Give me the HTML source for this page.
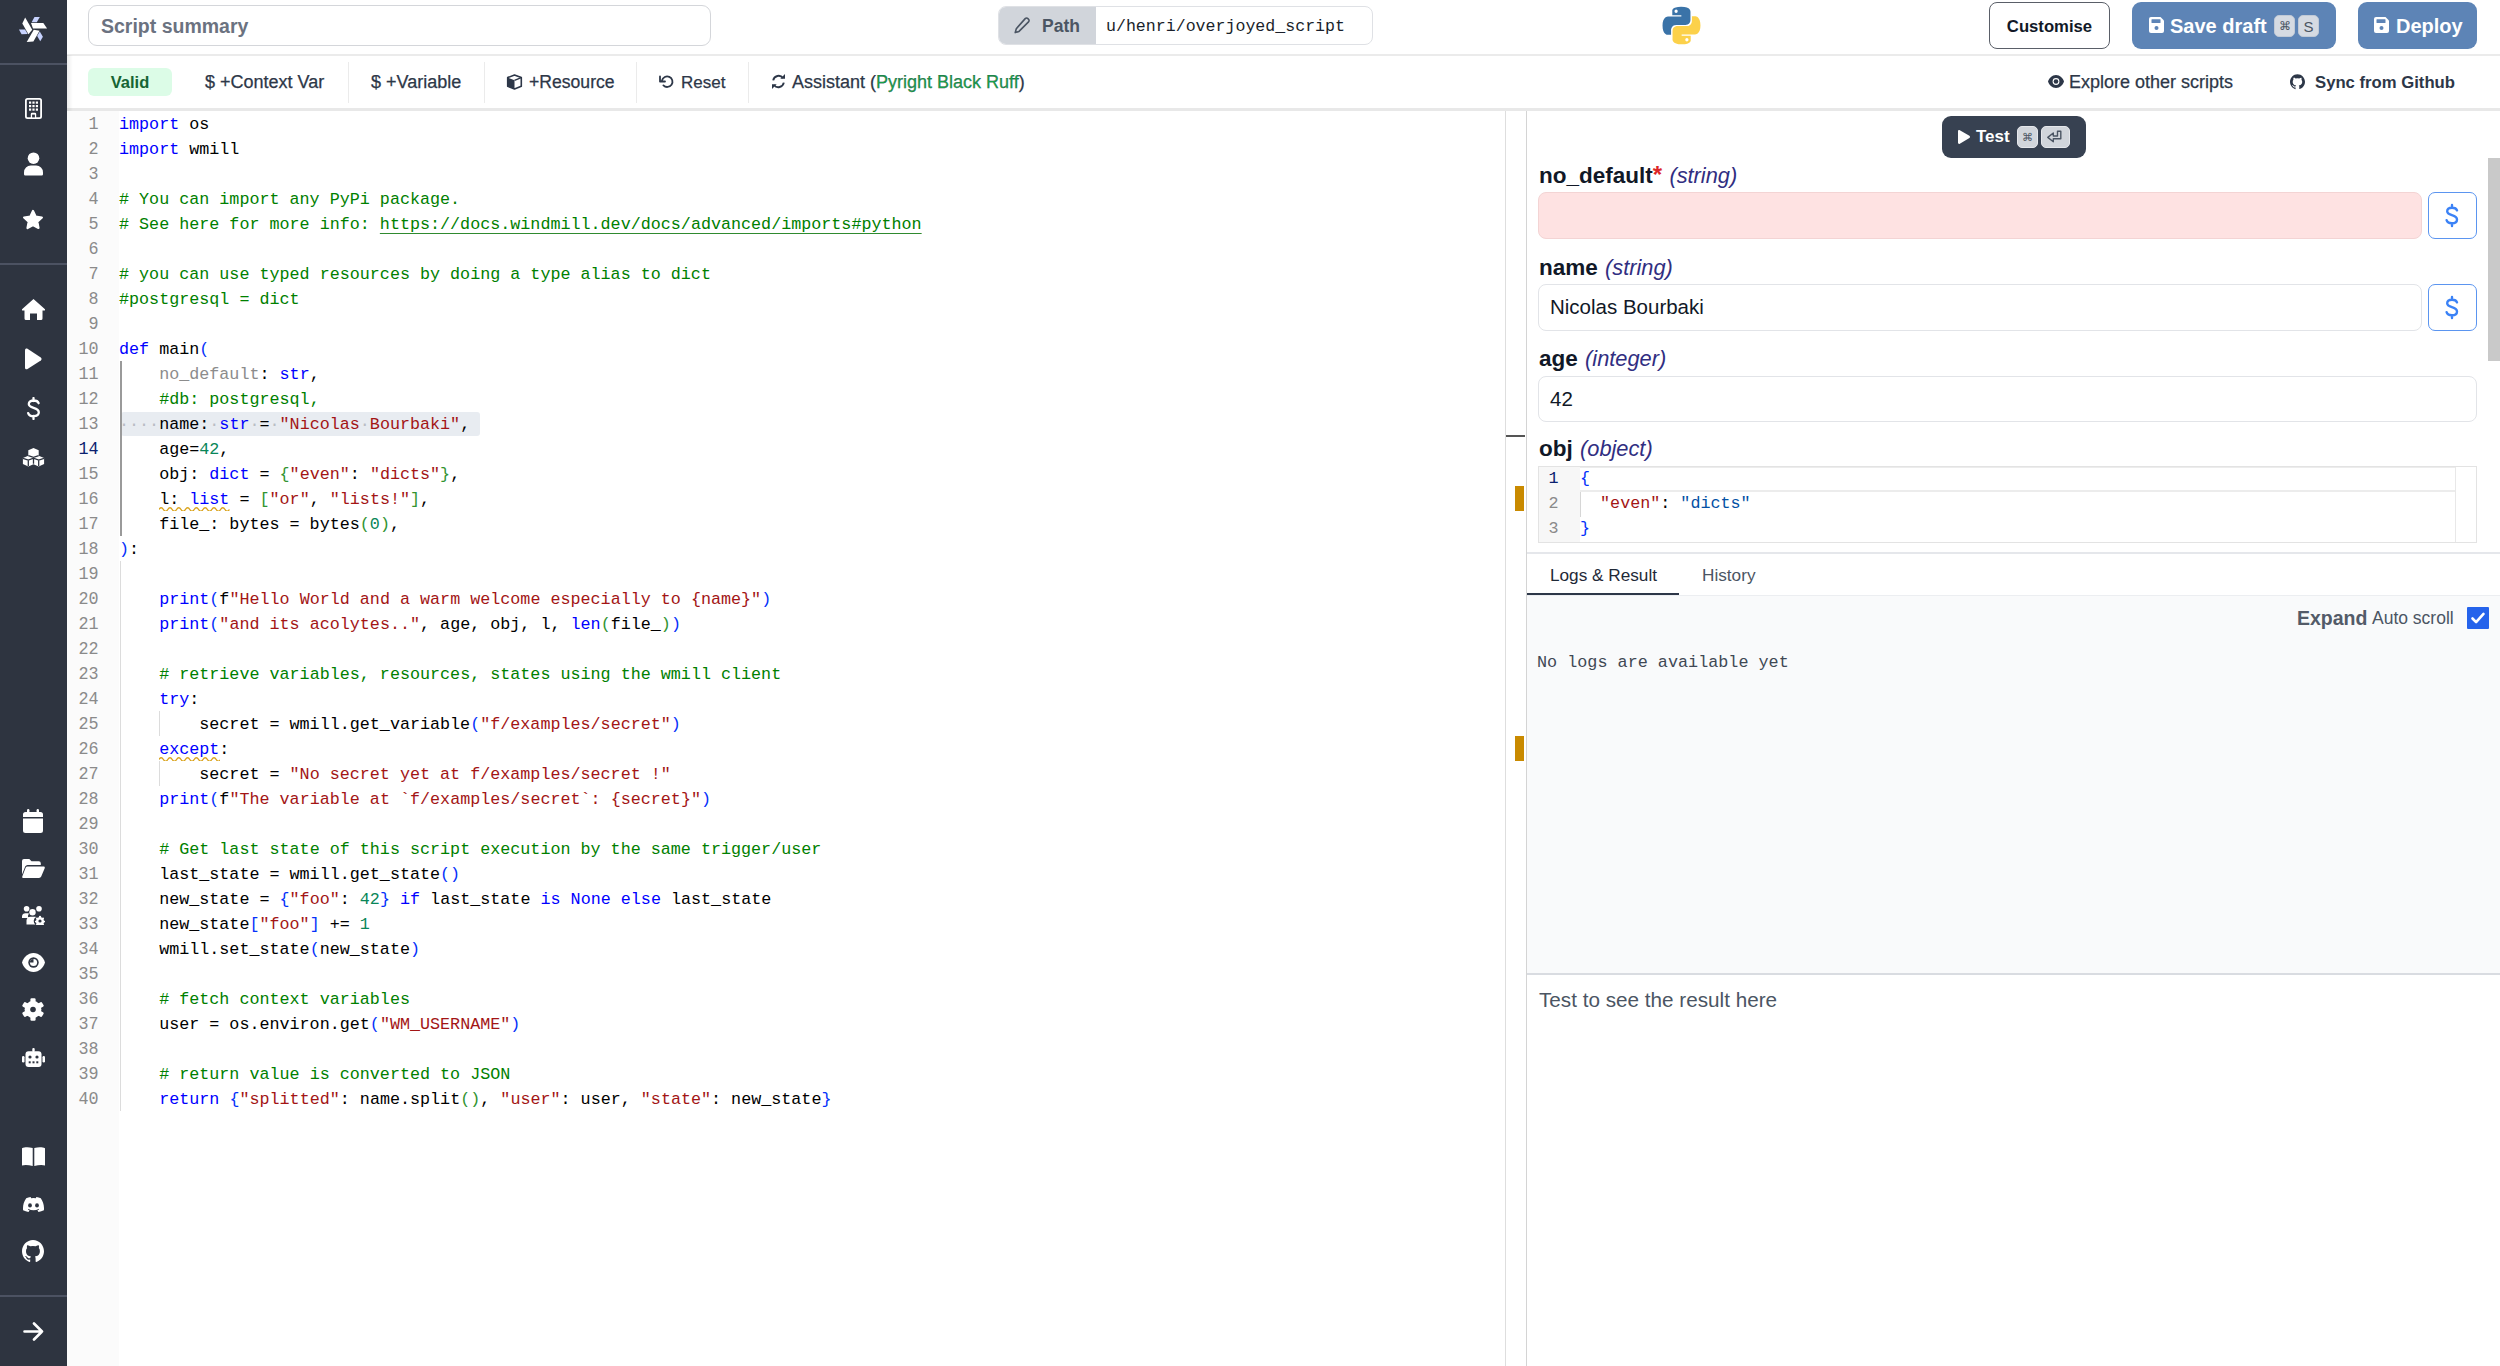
<!DOCTYPE html>
<html><head><meta charset="utf-8">
<style>
*{box-sizing:border-box;margin:0;padding:0}
html,body{width:2500px;height:1366px;overflow:hidden;background:#fff;font-family:"Liberation Sans",sans-serif;color:#1f2937;position:relative}
.a{position:absolute;white-space:nowrap}
#side{position:absolute;left:0;top:0;width:67px;height:1366px;background:#2e3440}
.hr{position:absolute;left:0;width:67px;height:2px;background:#4c5262}
.ic{position:absolute;fill:#fff}
.tbt{position:absolute;top:56px;height:53px;line-height:53px;font-size:18px;color:#2d3748;white-space:nowrap;-webkit-text-stroke:0.25px #2d3748}
.sep{position:absolute;top:62px;width:1px;height:41px;background:#ebebeb}
.ln{position:absolute;left:67px;width:31.5px;text-align:right;font-family:"Liberation Mono",monospace;font-size:16.73px;color:#8a8a8a;height:25px;line-height:25px}
.ln.act{color:#0b216f}
.ln{transform:scaleY(1.1);transform-origin:0 18px}
.cl{position:absolute;left:119px;font-family:"Liberation Mono",monospace;font-size:16.73px;height:25px;line-height:25px;white-space:pre;color:#000}
.k{color:#0000ff}.c{color:#008000}.s{color:#a31515}.n{color:#098658}.b1{color:#0431fa}.b2{color:#319331}.g{color:#8c8c8c}
.cl u{text-decoration:underline;text-underline-offset:4px;text-decoration-thickness:1px;text-decoration-color:#2f8a2f}
.lbl{position:absolute;left:1539px;font-size:22.5px;font-weight:bold;color:#111827;white-space:nowrap;line-height:26px}
.lbl i{font-weight:normal;color:#312e81;font-size:21.8px;margin-left:1px}
.inp{position:absolute;left:1538px;border:1px solid #e2e4e8;border-radius:8px;background:#fff}
.dol{position:absolute;left:2428px;width:49px;height:47px;border:1.5px solid #5b95f0;border-radius:7px}
.kbd{position:absolute;border-radius:5px;border:1px solid #e5e7eb;background:#d1d5db;color:#4b5563;text-align:center}
</style></head><body>
<div id="side">
  <div class="hr" style="top:63px"></div>
  <div class="hr" style="top:263px"></div>
  <div class="hr" style="top:1295px"></div>
  <!-- logo -->
  <svg class="ic" style="left:0;top:0" width="67" height="60" viewBox="0 0 67 60">
    <g><polygon points="31,22.9 43.3,22.9 47.1,28.4 33,28.4" fill="#fff"/>
      <polygon points="31.6,22.3 34.5,17 39.8,17 36.8,22.3" fill="#c7d2fe"/></g>
    <g transform="rotate(120 33 29.3)"><polygon points="31,22.9 43.3,22.9 47.1,28.4 33,28.4" fill="#fff"/>
      <polygon points="31.6,22.3 34.5,17 39.8,17 36.8,22.3" fill="#c7d2fe"/></g>
    <g transform="rotate(240 33 29.3)"><polygon points="31,22.9 43.3,22.9 47.1,28.4 33,28.4" fill="#fff"/>
      <polygon points="31.6,22.3 34.5,17 39.8,17 36.8,22.3" fill="#c7d2fe"/></g>
  </svg>
  <!-- building -->
  <svg class="ic" style="left:25px;top:98px" width="17" height="21" viewBox="0 0 17 21">
    <path d="M2.5 0h12A2.5 2.5 0 0 1 17 2.5v16A2.5 2.5 0 0 1 14.5 21h-12A2.5 2.5 0 0 1 0 18.5v-16A2.5 2.5 0 0 1 2.5 0zM2.5 1.8a.7.7 0 0 0-.7.7v16a.7.7 0 0 0 .7.7H5.8v-3.2a1.3 1.3 0 0 1 1.3-1.3h2.8a1.3 1.3 0 0 1 1.3 1.3v3.2h3.3a.7.7 0 0 0 .7-.7v-16a.7.7 0 0 0-.7-.7z"/>
    <rect x="7.1" y="16.6" width="2.8" height="2.8" fill="#2e3440"/>
    <g><rect x="4" y="3.5" width="2.2" height="2.2"/><rect x="7.4" y="3.5" width="2.2" height="2.2"/><rect x="10.8" y="3.5" width="2.2" height="2.2"/>
    <rect x="4" y="7" width="2.2" height="2.2"/><rect x="7.4" y="7" width="2.2" height="2.2"/><rect x="10.8" y="7" width="2.2" height="2.2"/>
    <rect x="4" y="10.5" width="2.2" height="2.2"/><rect x="7.4" y="10.5" width="2.2" height="2.2"/><rect x="10.8" y="10.5" width="2.2" height="2.2"/></g>
  </svg>
  <!-- user -->
  <svg class="ic" style="left:23px;top:152px" width="21" height="24" viewBox="0 0 21 24">
    <circle cx="10.5" cy="6.2" r="5.8"/>
    <path d="M7.8 13.6h5.4a6.8 6.8 0 0 1 6.8 6.8v1.8a1.3 1.3 0 0 1-1.3 1.3H2.3A1.3 1.3 0 0 1 1 22.2v-1.8a6.8 6.8 0 0 1 6.8-6.8z"/>
  </svg>
  <!-- star -->
  <svg class="ic" style="left:22px;top:209px" width="22" height="22" viewBox="0 0 22 22">
    <path d="M11 2l2.7 5.7 6.2.8-4.6 4.3 1.2 6.2L11 16l-5.5 3 1.2-6.2L2.1 8.5l6.2-.8z" stroke="#fff" stroke-width="2.2" stroke-linejoin="round"/>
  </svg>
  <!-- home -->
  <svg class="ic" style="left:22px;top:299px" width="23" height="21" viewBox="0 0 23 21">
    <path d="M11.5 0L23 10.2a.8.8 0 0 1-.6 1.3H20.5V19.5A1.5 1.5 0 0 1 19 21h-4v-6.5h-7V21H4a1.5 1.5 0 0 1-1.5-1.5V11.5H.6A.8.8 0 0 1 0 10.2z"/>
  </svg>
  <!-- play -->
  <svg class="ic" style="left:24px;top:348px" width="18" height="22" viewBox="0 0 18 22">
    <path d="M1 2.2C1 .9 2.4.1 3.5.8l13.3 8.7c1 .7 1 2.2 0 2.9L3.5 21.1C2.4 21.8 1 21 1 19.7z"/>
  </svg>
  <!-- dollar -->
  <svg class="ic" style="left:26px;top:397px" width="15" height="23" viewBox="0 0 15 23">
    <path d="M7.5 1v3M7.5 19v3M12.6 6.2C12 4.4 10.2 3.5 7.6 3.5 4.6 3.5 2.8 5 2.8 7c0 5 10 2.6 10 8.3 0 2.2-2 3.9-5.3 3.9-2.8 0-4.7-1.1-5.3-3.1" fill="none" stroke="#fff" stroke-width="2.3" stroke-linecap="round"/>
  </svg>
  <!-- cubes -->
  <svg class="ic" style="left:22px;top:448px" width="23" height="21" viewBox="0 0 23 21">
    <path d="M11.5 0l5.2 2.2v5.5l5.4 2.3V16l-5.4 2.6-5.2-2.3-5.2 2.3L.9 16v-6l5.4-2.3V2.2z"/>
    <path d="M11.5 9.3v6.5M6.3 12v6M16.7 12v6M6.3 7.7l5.2 1.6 5.2-1.6M1 10.3l5.3 1.7 5.2-1.9 5.2 1.9 5.3-1.7" fill="none" stroke="#2e3440" stroke-width="1.3"/>
  </svg>
  <!-- calendar -->
  <svg class="ic" style="left:23px;top:809px" width="20" height="24" viewBox="0 0 20 24">
    <rect x="4" y="0" width="2.4" height="5" rx="1.2"/><rect x="13.6" y="0" width="2.4" height="5" rx="1.2"/>
    <path d="M2.5 3h15A2.5 2.5 0 0 1 20 5.5V8H0V5.5A2.5 2.5 0 0 1 2.5 3zM0 9.5h20v12A2.5 2.5 0 0 1 17.5 24h-15A2.5 2.5 0 0 1 0 21.5z"/>
  </svg>
  <!-- folder open -->
  <svg class="ic" style="left:22px;top:859px" width="23" height="19" viewBox="0 0 23 19">
    <path d="M0 2A2 2 0 0 1 2 0h5.3l2.2 2.2h7.3a2 2 0 0 1 2 2V6H5.6a2.6 2.6 0 0 0-2.4 1.6L0 15.4z"/>
    <path d="M5.5 7.5H21.6c.9 0 1.5.9 1.1 1.7l-3.5 8.3a2.4 2.4 0 0 1-2.2 1.5H1.3c-.8 0-1.3-.8-1-1.5L3.6 8.8a2 2 0 0 1 1.9-1.3z"/>
  </svg>
  <!-- users cog -->
  <svg class="ic" style="left:22px;top:906px" width="23" height="19" viewBox="0 0 23 19">
    <circle cx="4.6" cy="2.8" r="2.8"/><circle cx="17" cy="2.8" r="2.8"/><circle cx="10.5" cy="6.2" r="3.2"/>
    <path d="M0 10.5a3.5 3.5 0 0 1 3.5-3.2h2.2c.4 0 .8.1 1.2.3a4.8 4.8 0 0 0-.5 4.5H0zM4.5 14.5a4 4 0 0 1 4-3.8h4.2c.5 0 1 .1 1.4.3a4.5 4.5 0 0 0-.6 7.6H4.5z"/>
    <path d="M18 9.8l.9.2.3 1.2 1 .6 1.2-.4.7.8-.5 1.1.3 1.1 1.1.6v1.1l-1.1.6-.3 1.1.5 1.1-.7.8-1.2-.4-1 .6-.3 1.2-.9.2-.9-.2-.3-1.2-1-.6-1.2.4-.7-.8.5-1.1-.3-1.1-1.1-.6v-1.1l1.1-.6.3-1.1-.5-1.1.7-.8 1.2.4 1-.6.3-1.2z"/>
    <circle cx="18" cy="15" r="1.6" fill="#2e3440"/>
  </svg>
  <!-- eye -->
  <svg class="ic" style="left:22px;top:953px" width="23" height="19" viewBox="0 0 23 19">
    <path d="M11.5 0C5.8 0 1.6 4.3 0 9.5 1.6 14.7 5.8 19 11.5 19S21.4 14.7 23 9.5C21.4 4.3 17.2 0 11.5 0z"/>
    <circle cx="11.5" cy="9.5" r="5.2" fill="#2e3440"/>
    <circle cx="11.5" cy="9.5" r="3.6"/>
    <path d="M11.5 5.9a3.6 3.6 0 0 0-3.6 3.6h3.6z" fill="#2e3440"/>
  </svg>
  <!-- gear -->
  <svg class="ic" style="left:22px;top:998px" width="22" height="23" viewBox="-11 -11.5 22 23">
    <circle r="8.4"/>
    <g><rect x="-2.6" y="-11.3" width="5.2" height="5" rx="1.2"/>
    <rect x="-2.6" y="-11.3" width="5.2" height="5" rx="1.2" transform="rotate(60)"/>
    <rect x="-2.6" y="-11.3" width="5.2" height="5" rx="1.2" transform="rotate(120)"/>
    <rect x="-2.6" y="-11.3" width="5.2" height="5" rx="1.2" transform="rotate(180)"/>
    <rect x="-2.6" y="-11.3" width="5.2" height="5" rx="1.2" transform="rotate(240)"/>
    <rect x="-2.6" y="-11.3" width="5.2" height="5" rx="1.2" transform="rotate(300)"/></g>
    <circle r="2.8" fill="#2e3440"/>
  </svg>
  <!-- robot -->
  <svg class="ic" style="left:22px;top:1048px" width="23" height="19" viewBox="0 0 23 19">
    <rect x="10.3" y="0" width="2.4" height="4" rx="1"/>
    <rect x="3.5" y="3.3" width="16" height="15.7" rx="3"/>
    <rect x="0" y="8" width="2.5" height="6.5" rx="1.2"/><rect x="20.5" y="8" width="2.5" height="6.5" rx="1.2"/>
    <circle cx="8" cy="9" r="1.6" fill="#2e3440"/><circle cx="15" cy="9" r="1.6" fill="#2e3440"/>
    <rect x="6.7" y="13.3" width="2" height="2" fill="#2e3440"/><rect x="10.5" y="13.3" width="2" height="2" fill="#2e3440"/><rect x="14.3" y="13.3" width="2" height="2" fill="#2e3440"/>
  </svg>
  <!-- book -->
  <svg class="ic" style="left:22px;top:1147px" width="23" height="19" viewBox="0 0 23 19">
    <path d="M0 1.2C2.2.2 5.8-.4 10.7 1v18C6.4 17.7 2.5 17.6 0 18.4z"/>
    <path d="M23 1.2C20.8.2 17.2-.4 12.3 1v18c4.3-1.3 8.2-1.4 10.7-.6z"/>
  </svg>
  <!-- discord -->
  <svg class="ic" style="left:23px;top:1197px" width="21" height="15" viewBox="0 0 21 15">
    <path d="M17.8 1.3A17 17 0 0 0 13.4 0l-.6 1.2a16 16 0 0 0-4.6 0L7.6 0A17 17 0 0 0 3.2 1.3C.4 5.4-.3 9.4.1 13.3A17.5 17.5 0 0 0 5.5 15l1.1-1.8c-.6-.2-1.2-.5-1.7-.8l.4-.3c3.4 1.6 7.1 1.6 10.4 0l.4.3c-.5.3-1.1.6-1.7.8L15.5 15a17.5 17.5 0 0 0 5.4-1.7c.5-4.5-.8-8.5-3.1-12z"/>
    <ellipse cx="7" cy="8.4" rx="1.9" ry="2.1" fill="#2e3440"/><ellipse cx="14" cy="8.4" rx="1.9" ry="2.1" fill="#2e3440"/>
  </svg>
  <!-- github -->
  <svg class="ic" style="left:22px;top:1240px" width="22" height="23" viewBox="0 0 22 23">
    <path d="M11 0C4.9 0 0 5 0 11.3c0 5 3.2 9.2 7.5 10.7.6.1.7-.2.7-.5v-2c-3 .7-3.7-1.3-3.7-1.3-.5-1.3-1.2-1.6-1.2-1.6-1-.7.1-.7.1-.7 1.1.1 1.7 1.1 1.7 1.1 1 1.7 2.6 1.2 3.2.9.1-.7.4-1.2.7-1.5-2.4-.3-5-1.2-5-5.4 0-1.2.4-2.2 1.1-2.9-.1-.3-.5-1.4.1-2.9 0 0 .9-.3 3 1.1a10 10 0 0 1 5.5 0c2.1-1.4 3-1.1 3-1.1.6 1.5.2 2.6.1 2.9.7.8 1.1 1.8 1.1 2.9 0 4.2-2.6 5.1-5 5.4.4.3.7 1 .7 2v3c0 .3.2.6.8.5C18.8 20.5 22 16.3 22 11.3 22 5 17.1 0 11 0z"/>
  </svg>
  <!-- arrow -->
  <svg class="ic" style="left:23px;top:1322px" width="21" height="19" viewBox="0 0 21 19">
    <path d="M1.5 9.5h17.5M11 1.5l8 8-8 8" fill="none" stroke="#fff" stroke-width="2.6" stroke-linecap="round" stroke-linejoin="round"/>
  </svg>
</div>
<!-- header -->
<div class="a" style="left:67px;top:54px;width:2433px;height:2px;background:#ebebeb"></div>
<div class="a" style="left:88px;top:5px;width:623px;height:41px;border:1px solid #d4d6da;border-radius:9px"></div>
<div class="a" style="left:101px;top:6px;height:41px;line-height:41px;font-size:19.5px;font-weight:bold;color:#6b7280">Script summary</div>
<!-- path -->
<div class="a" style="left:998px;top:6px;width:375px;height:39px;border:1px solid #dfe1e5;border-radius:8px;overflow:hidden">
  <div class="a" style="left:0;top:0;width:97px;height:39px;background:#d1d5db"></div>
</div>
<svg class="a" style="left:1014px;top:17px" width="16" height="17" viewBox="0 0 16 17">
  <path d="M11.2 1.6a1.9 1.9 0 0 1 2.7 0l.6.6a1.9 1.9 0 0 1 0 2.7L5 14.4 1.2 15.6l1.1-3.9z" fill="none" stroke="#4b5563" stroke-width="1.6" stroke-linejoin="round"/>
</svg>
<div class="a" style="left:1042px;top:6px;height:39px;line-height:40px;font-size:17.5px;font-weight:bold;color:#4b5563">Path</div>
<div class="a" style="left:1106px;top:6px;height:39px;line-height:41px;font-family:'Liberation Mono',monospace;font-size:16.6px;color:#1a1f2b">u/henri/overjoyed_script</div>
<!-- python logo -->
<svg class="a" style="left:1662px;top:6px" width="39" height="39" viewBox="0 0 110 110">
  <path d="M54 2c-27 0-25 11.7-25 11.7v12.2h25.6v3.6H18.8S1.5 27.6 1.5 55s15.1 26.4 15.1 26.4h9v-12.7s-.5-15.1 14.9-15.1h25.4s14.4.2 14.4-13.9V16.4S82.6 2 54 2zM39.8 10.2a4.6 4.6 0 1 1 0 9.2 4.6 4.6 0 0 1 0-9.2z" fill="#3a73a8"/>
  <path d="M56 108c27 0 25-11.7 25-11.7V84.1H55.4v-3.6h35.8s17.3 1.9 17.3-25.5-15.1-26.4-15.1-26.4h-9v12.7s.5 15.1-14.9 15.1H44.1s-14.4-.2-14.4 13.9v23.3S27.4 108 56 108zm14.2-8.2a4.6 4.6 0 1 1 0-9.2 4.6 4.6 0 0 1 0 9.2z" fill="#fcd14a"/>
</svg>
<!-- buttons -->
<div class="a" style="left:1989px;top:2px;width:121px;height:47px;border:1.5px solid #5a5f68;border-radius:8px;background:#fff"></div>
<div class="a" style="left:1989px;top:2px;width:121px;height:47px;line-height:49px;text-align:center;font-size:16.7px;font-weight:bold;color:#111827">Customise</div>
<div class="a" style="left:2132px;top:2px;width:204px;height:47px;border-radius:9px;background:#5d84b6"></div>
<svg class="a" style="left:2149px;top:17px" width="15" height="16" viewBox="0 0 15 16">
  <path d="M2 0h9.5L15 3.5V14a2 2 0 0 1-2 2H2a2 2 0 0 1-2-2V2a2 2 0 0 1 2-2z" fill="#fff"/>
  <rect x="2.5" y="2.3" width="9" height="3.6" rx=".5" fill="#5d84b6"/>
  <circle cx="7.5" cy="11" r="2" fill="#5d84b6"/>
</svg>
<div class="a" style="left:2170px;top:2px;height:47px;line-height:49px;font-size:20px;font-weight:bold;color:#fff">Save draft</div>
<div class="kbd" style="left:2274px;top:15px;width:21px;height:22px;line-height:21px;font-size:12px;background:#d5dae2;border-color:#c0c9d6">&#8984;</div>
<div class="kbd" style="left:2298px;top:15px;width:21px;height:22px;line-height:22px;font-size:15px;background:#d5dae2;border-color:#c0c9d6">S</div>
<div class="a" style="left:2358px;top:2px;width:119px;height:47px;border-radius:9px;background:#5d84b6"></div>
<svg class="a" style="left:2374px;top:17px" width="15" height="16" viewBox="0 0 15 16">
  <path d="M2 0h9.5L15 3.5V14a2 2 0 0 1-2 2H2a2 2 0 0 1-2-2V2a2 2 0 0 1 2-2z" fill="#fff"/>
  <rect x="2.5" y="2.3" width="9" height="3.6" rx=".5" fill="#5d84b6"/>
  <circle cx="7.5" cy="11" r="2" fill="#5d84b6"/>
</svg>
<div class="a" style="left:2396px;top:2px;height:47px;line-height:49px;font-size:20px;font-weight:bold;color:#fff">Deploy</div>

<!-- toolbar -->
<div class="a" style="left:67px;top:108px;width:2433px;height:3px;background:#e8e8e8"></div>
<div class="a" style="left:88px;top:68px;width:84px;height:28px;background:#dcfce7;border-radius:6px"></div>
<div class="a" style="left:88px;top:68px;width:84px;height:28px;line-height:28px;text-align:center;font-size:16.5px;font-weight:bold;color:#166534">Valid</div>
<div class="tbt" style="left:205px">$ +Context Var</div>
<div class="sep" style="left:348px"></div>
<div class="tbt" style="left:371px">$ +Variable</div>
<div class="sep" style="left:484px"></div>
<svg class="a" style="left:506px;top:74px" width="17" height="16" viewBox="0 0 17 16">
  <path d="M8.5 1l6.8 2.6v8.6L8.5 15 1.7 12.2V3.6z" fill="#fff" stroke="#2d3748" stroke-width="1.6" stroke-linejoin="round"/>
  <path d="M1.7 3.6L8.5 6.3V15L1.7 12.2z" fill="#2d3748"/>
  <path d="M8.5 6.3l6.8-2.7" fill="none" stroke="#2d3748" stroke-width="1.4"/>
</svg>
<div class="tbt" style="left:529px;font-size:17.6px">+Resource</div>
<div class="sep" style="left:636px"></div>
<svg class="a" style="left:659px;top:74px" width="15" height="15" viewBox="0 0 15 15">
  <path d="M3 6.5A5.3 5.3 0 1 1 4.4 11.4" fill="none" stroke="#2d3748" stroke-width="1.8" stroke-linecap="round"/>
  <path d="M1 2.5v5h5" fill="none" stroke="#2d3748" stroke-width="1.8" stroke-linecap="round" stroke-linejoin="round"/>
</svg>
<div class="tbt" style="left:681px;font-size:17px">Reset</div>
<div class="sep" style="left:748px"></div>
<svg class="a" style="left:771px;top:74px" width="15" height="15" viewBox="0 0 15 15">
  <path d="M2.2 6.3A5.5 5.5 0 0 1 12 4M12.8 8.7A5.5 5.5 0 0 1 3 11" fill="none" stroke="#2d3748" stroke-width="1.9"/>
  <path d="M9.3 4.7H14V0z M5.7 10.3H1V15z" fill="#2d3748"/>
</svg>
<div class="tbt" style="left:792px">Assistant (<span style="color:#16a34a">Pyright Black Ruff</span>)</div>
<svg class="a" style="left:2048px;top:75px" width="16" height="13" viewBox="0 0 16 13">
  <path d="M8 0C4 0 1.1 3 0 6.5 1.1 10 4 13 8 13s6.9-3 8-6.5C14.9 3 12 0 8 0z" fill="#2d3748"/>
  <circle cx="8" cy="6.5" r="3.4" fill="#fff"/><circle cx="8" cy="6.5" r="2.3" fill="#2d3748"/>
</svg>
<div class="tbt" style="left:2069px">Explore other scripts</div>
<svg class="a" style="left:2290px;top:74px" width="15" height="16" viewBox="0 0 22 23">
  <path d="M11 0C4.9 0 0 5 0 11.3c0 5 3.2 9.2 7.5 10.7.6.1.7-.2.7-.5v-2c-3 .7-3.7-1.3-3.7-1.3-.5-1.3-1.2-1.6-1.2-1.6-1-.7.1-.7.1-.7 1.1.1 1.7 1.1 1.7 1.1 1 1.7 2.6 1.2 3.2.9.1-.7.4-1.2.7-1.5-2.4-.3-5-1.2-5-5.4 0-1.2.4-2.2 1.1-2.9-.1-.3-.5-1.4.1-2.9 0 0 .9-.3 3 1.1a10 10 0 0 1 5.5 0c2.1-1.4 3-1.1 3-1.1.6 1.5.2 2.6.1 2.9.7.8 1.1 1.8 1.1 2.9 0 4.2-2.6 5.1-5 5.4.4.3.7 1 .7 2v3c0 .3.2.6.8.5C18.8 20.5 22 16.3 22 11.3 22 5 17.1 0 11 0z" fill="#2d3748"/>
</svg>
<div class="tbt" style="left:2315px;font-size:16.7px;font-weight:bold;-webkit-text-stroke:0">Sync from Github</div>
<!-- code editor -->
<div class="a" style="left:67px;top:55px;width:6px;height:1311px;background:linear-gradient(to right,rgba(0,0,0,0.07),rgba(0,0,0,0))"></div>
<div class="a" style="left:67px;top:111px;width:52px;height:1255px;background:#fbfbfb"></div>
<!-- line 13 highlight -->
<div class="a" style="left:121px;top:412px;width:359px;height:24px;background:#e8ecf1;border-radius:3px"></div>
<!-- whitespace dots line 13 -->
<div class="a" style="left:119px;top:412px;height:25px;line-height:25px;font-family:'Liberation Mono',monospace;font-size:16.73px;color:#b9bdc4;white-space:pre">····     ·   · ·        ·</div>
<!-- indent guides -->
<div class="a" style="left:120px;top:361px;width:2px;height:175px;background:#9a9a9a"></div>
<div class="a" style="left:120px;top:561px;width:1px;height:550px;background:#dcdcdc"></div>
<div class="a" style="left:159px;top:711px;width:1px;height:25px;background:#dcdcdc"></div>
<div class="a" style="left:159px;top:761px;width:1px;height:25px;background:#dcdcdc"></div>
<!-- squiggles -->
<svg class="a" style="left:159px;top:505px" width="71" height="6" viewBox="0 0 71 6"><path d="M0 4.5 Q2.2 1 4.4 4.5 T8.8 4.5 T13.2 4.5 T17.6 4.5 T22 4.5 T26.4 4.5 T30.8 4.5 T35.2 4.5 T39.6 4.5 T44 4.5 T48.4 4.5 T52.8 4.5 T57.2 4.5 T61.6 4.5 T66 4.5 T70.4 4.5" fill="none" stroke="#d9a219" stroke-width="1.4"/></svg>
<svg class="a" style="left:159px;top:755px" width="61" height="6" viewBox="0 0 61 6"><path d="M0 4.5 Q2.2 1 4.4 4.5 T8.8 4.5 T13.2 4.5 T17.6 4.5 T22 4.5 T26.4 4.5 T30.8 4.5 T35.2 4.5 T39.6 4.5 T44 4.5 T48.4 4.5 T52.8 4.5 T57.2 4.5 T61.6 4.5" fill="none" stroke="#d9a219" stroke-width="1.4"/></svg>
<!-- overview ruler -->
<div class="a" style="left:1505px;top:111px;width:1px;height:1255px;background:#dedede"></div>
<div class="a" style="left:1526px;top:111px;width:1px;height:1255px;background:#d4d4d4"></div>
<div class="a" style="left:1506px;top:435px;width:19px;height:2px;background:#555"></div>
<div class="a" style="left:1515px;top:486px;width:9px;height:25px;background:#c98a00"></div>
<div class="a" style="left:1515px;top:736px;width:9px;height:25px;background:#c98a00"></div>
<div class="ln" style="top:112px">1</div><div class="cl" style="top:112px"><span class="k">import</span> os</div>
<div class="ln" style="top:137px">2</div><div class="cl" style="top:137px"><span class="k">import</span> wmill</div>
<div class="ln" style="top:162px">3</div><div class="cl" style="top:162px"></div>
<div class="ln" style="top:187px">4</div><div class="cl" style="top:187px"><span class="c"># You can import any PyPi package.</span></div>
<div class="ln" style="top:212px">5</div><div class="cl" style="top:212px"><span class="c"># See here for more info: <u>https://docs.windmill.dev/docs/advanced/imports#python</u></span></div>
<div class="ln" style="top:237px">6</div><div class="cl" style="top:237px"></div>
<div class="ln" style="top:262px">7</div><div class="cl" style="top:262px"><span class="c"># you can use typed resources by doing a type alias to dict</span></div>
<div class="ln" style="top:287px">8</div><div class="cl" style="top:287px"><span class="c">#postgresql = dict</span></div>
<div class="ln" style="top:312px">9</div><div class="cl" style="top:312px"></div>
<div class="ln" style="top:337px">10</div><div class="cl" style="top:337px"><span class="k">def</span> main<span class="b1">(</span></div>
<div class="ln" style="top:362px">11</div><div class="cl" style="top:362px">    <span class="g">no_default</span>: <span class="k">str</span>,</div>
<div class="ln" style="top:387px">12</div><div class="cl" style="top:387px">    <span class="c">#db: postgresql,</span></div>
<div class="ln" style="top:412px">13</div><div class="cl" style="top:412px">    name: <span class="k">str</span> = <span class="s">"Nicolas Bourbaki"</span>,</div>
<div class="ln act" style="top:437px">14</div><div class="cl" style="top:437px">    age=<span class="n">42</span>,</div>
<div class="ln" style="top:462px">15</div><div class="cl" style="top:462px">    obj: <span class="k">dict</span> = <span class="b2">{</span><span class="s">"even"</span>: <span class="s">"dicts"</span><span class="b2">}</span>,</div>
<div class="ln" style="top:487px">16</div><div class="cl" style="top:487px">    l: <span class="k">list</span> = <span class="b2">[</span><span class="s">"or"</span>, <span class="s">"lists!"</span><span class="b2">]</span>,</div>
<div class="ln" style="top:512px">17</div><div class="cl" style="top:512px">    file_: bytes = bytes<span class="b2">(</span><span class="n">0</span><span class="b2">)</span>,</div>
<div class="ln" style="top:537px">18</div><div class="cl" style="top:537px"><span class="b1">)</span>:</div>
<div class="ln" style="top:562px">19</div><div class="cl" style="top:562px"></div>
<div class="ln" style="top:587px">20</div><div class="cl" style="top:587px">    <span class="k">print</span><span class="b1">(</span>f<span class="s">"Hello World and a warm welcome especially to {name}"</span><span class="b1">)</span></div>
<div class="ln" style="top:612px">21</div><div class="cl" style="top:612px">    <span class="k">print</span><span class="b1">(</span><span class="s">"and its acolytes.."</span>, age, obj, l, <span class="k">len</span><span class="b2">(</span>file_<span class="b2">)</span><span class="b1">)</span></div>
<div class="ln" style="top:637px">22</div><div class="cl" style="top:637px"></div>
<div class="ln" style="top:662px">23</div><div class="cl" style="top:662px">    <span class="c"># retrieve variables, resources, states using the wmill client</span></div>
<div class="ln" style="top:687px">24</div><div class="cl" style="top:687px">    <span class="k">try</span>:</div>
<div class="ln" style="top:712px">25</div><div class="cl" style="top:712px">        secret = wmill.get_variable<span class="b1">(</span><span class="s">"f/examples/secret"</span><span class="b1">)</span></div>
<div class="ln" style="top:737px">26</div><div class="cl" style="top:737px">    <span class="k">except</span>:</div>
<div class="ln" style="top:762px">27</div><div class="cl" style="top:762px">        secret = <span class="s">"No secret yet at f/examples/secret !"</span></div>
<div class="ln" style="top:787px">28</div><div class="cl" style="top:787px">    <span class="k">print</span><span class="b1">(</span>f<span class="s">"The variable at `f/examples/secret`: {secret}"</span><span class="b1">)</span></div>
<div class="ln" style="top:812px">29</div><div class="cl" style="top:812px"></div>
<div class="ln" style="top:837px">30</div><div class="cl" style="top:837px">    <span class="c"># Get last state of this script execution by the same trigger/user</span></div>
<div class="ln" style="top:862px">31</div><div class="cl" style="top:862px">    last_state = wmill.get_state<span class="b1">()</span></div>
<div class="ln" style="top:887px">32</div><div class="cl" style="top:887px">    new_state = <span class="b1">{</span><span class="s">"foo"</span>: <span class="n">42</span><span class="b1">}</span> <span class="k">if</span> last_state <span class="k">is</span> <span class="k">None</span> <span class="k">else</span> last_state</div>
<div class="ln" style="top:912px">33</div><div class="cl" style="top:912px">    new_state<span class="b1">[</span><span class="s">"foo"</span><span class="b1">]</span> += <span class="n">1</span></div>
<div class="ln" style="top:937px">34</div><div class="cl" style="top:937px">    wmill.set_state<span class="b1">(</span>new_state<span class="b1">)</span></div>
<div class="ln" style="top:962px">35</div><div class="cl" style="top:962px"></div>
<div class="ln" style="top:987px">36</div><div class="cl" style="top:987px">    <span class="c"># fetch context variables</span></div>
<div class="ln" style="top:1012px">37</div><div class="cl" style="top:1012px">    user = os.environ.get<span class="b1">(</span><span class="s">"WM_USERNAME"</span><span class="b1">)</span></div>
<div class="ln" style="top:1037px">38</div><div class="cl" style="top:1037px"></div>
<div class="ln" style="top:1062px">39</div><div class="cl" style="top:1062px">    <span class="c"># return value is converted to JSON</span></div>
<div class="ln" style="top:1087px">40</div><div class="cl" style="top:1087px">    <span class="k">return</span> <span class="b1">{</span><span class="s">"splitted"</span>: name.split<span class="b2">()</span>, <span class="s">"user"</span>: user, <span class="s">"state"</span>: new_state<span class="b1">}</span></div><!-- right panel -->
<div class="a" style="left:2488px;top:158px;width:12px;height:203px;background:#c9c9c9"></div>
<!-- test button -->
<div class="a" style="left:1942px;top:116px;width:144px;height:42px;border-radius:9px;background:#374151"></div>
<svg class="a" style="left:1958px;top:130px" width="12" height="14" viewBox="0 0 12 14">
  <path d="M0 1.2C0 .3 1 -.3 1.8.2l9.6 5.6c.8.5.8 1.7 0 2.2L1.8 13.8C1 14.3 0 13.7 0 12.8z" fill="#fff"/>
</svg>
<div class="a" style="left:1976px;top:116px;height:42px;line-height:41px;font-size:17px;font-weight:bold;color:#fff">Test</div>
<div class="kbd" style="left:2017px;top:126px;width:21px;height:22px;line-height:21px;font-size:11px;background:#d1d5db;border:1.5px solid #e5e7eb">&#8984;</div>
<div class="kbd" style="left:2041px;top:126px;width:29px;height:22px;background:#d1d5db;border:1.5px solid #e5e7eb"></div>
<svg class="a" style="left:2046px;top:130px" width="19" height="14" viewBox="0 0 19 14">
  <path d="M11.5 1.2h3.3v7.6H7.3V11.8L1.8 7.4 7.3 3V6h4.2z" fill="none" stroke="#4b5563" stroke-width="1.4" stroke-linejoin="round"/>
</svg>

<!-- no_default -->
<div class="lbl" style="top:162px">no_default<span style="color:#dc2626;font-size:24px">*</span> <i>(string)</i></div>
<div class="inp" style="top:192px;width:884px;height:47px;background:#fee2e2;border-color:#f3d4d4"></div>
<div class="dol" style="top:192px"></div>
<svg class="a" style="left:2444px;top:203px" width="16" height="25" viewBox="0 0 16 25">
  <path d="M8 2v2.7M8 20.3v2.7M13 7.3C12.4 5.5 10.6 4.7 8 4.7 5 4.7 3.2 6.2 3.2 8.2c0 5 9.8 2.7 9.8 8.3 0 2.3-2 3.8-5.1 3.8-2.8 0-4.7-1.1-5.3-3.1" fill="none" stroke="#3b82f6" stroke-width="2.4" stroke-linecap="round"/>
</svg>
<!-- name -->
<div class="lbl" style="top:255px">name <i>(string)</i></div>
<div class="inp" style="top:284px;width:884px;height:47px"></div>
<div class="a" style="left:1550px;top:284px;height:47px;line-height:46px;font-size:20.5px;color:#111827">Nicolas Bourbaki</div>
<div class="dol" style="top:284px"></div>
<svg class="a" style="left:2444px;top:295px" width="16" height="25" viewBox="0 0 16 25">
  <path d="M8 2v2.7M8 20.3v2.7M13 7.3C12.4 5.5 10.6 4.7 8 4.7 5 4.7 3.2 6.2 3.2 8.2c0 5 9.8 2.7 9.8 8.3 0 2.3-2 3.8-5.1 3.8-2.8 0-4.7-1.1-5.3-3.1" fill="none" stroke="#3b82f6" stroke-width="2.4" stroke-linecap="round"/>
</svg>
<!-- age -->
<div class="lbl" style="top:346px">age <i>(integer)</i></div>
<div class="inp" style="top:376px;width:939px;height:46px"></div>
<div class="a" style="left:1550px;top:376px;height:46px;line-height:45px;font-size:20.5px;color:#111827">42</div>
<!-- obj -->
<div class="lbl" style="top:436px">obj <i>(object)</i></div>
<div class="a" style="left:1538px;top:466px;width:939px;height:77px;border:1px solid #e3e3e3;background:#fff"></div>
<div class="a" style="left:1539px;top:467px;width:41px;height:75px;background:#f7f7f7"></div>
<div class="a" style="left:1580px;top:467px;width:876px;height:25px;border-top:1px solid #ececec;border-bottom:2px solid #ececec"></div>
<div class="a" style="left:2455px;top:467px;width:1px;height:75px;background:#e8e8e8"></div>
<div class="a" style="left:1580px;top:492px;width:1px;height:25px;background:#d6d6d6"></div>
<div class="a" style="left:1541px;top:466px;width:25px;height:25px;line-height:25px;text-align:center;font-family:'Liberation Mono',monospace;font-size:16.73px;color:#0b216f">1</div>
<div class="a" style="left:1541px;top:491px;width:25px;height:25px;line-height:25px;text-align:center;font-family:'Liberation Mono',monospace;font-size:16.73px;color:#8a8a8a">2</div>
<div class="a" style="left:1541px;top:516px;width:25px;height:25px;line-height:25px;text-align:center;font-family:'Liberation Mono',monospace;font-size:16.73px;color:#8a8a8a">3</div>
<div class="a" style="left:1580px;top:466px;height:25px;line-height:25px;font-family:'Liberation Mono',monospace;font-size:16.73px;color:#0431fa">{</div>
<div class="a" style="left:1580px;top:491px;height:25px;line-height:25px;font-family:'Liberation Mono',monospace;font-size:16.73px;color:#000;white-space:pre">  <span style="color:#a31515">"even"</span>: <span style="color:#0451a5">"dicts"</span></div>
<div class="a" style="left:1580px;top:516px;height:25px;line-height:25px;font-family:'Liberation Mono',monospace;font-size:16.73px;color:#0431fa">}</div>

<!-- separator + tabs -->
<div class="a" style="left:1527px;top:552px;width:973px;height:2px;background:#e5e7eb"></div>
<div class="a" style="left:1550px;top:560px;height:30px;line-height:30px;font-size:17.2px;color:#1f2937">Logs &amp; Result</div>
<div class="a" style="left:1702px;top:560px;height:30px;line-height:30px;font-size:17.2px;color:#4b5563">History</div>
<div class="a" style="left:1527px;top:595px;width:973px;height:380px;background:#f9fafb;border-top:1px solid #eceef1"></div>
<div class="a" style="left:1527px;top:593px;width:152px;height:2px;background:#2d3748"></div>
<div class="a" style="left:2297px;top:604px;height:28px;line-height:28px;font-size:19.5px;font-weight:bold;color:#535b68">Expand</div>
<div class="a" style="left:2372px;top:604px;height:28px;line-height:28px;font-size:17.5px;color:#4b5563">Auto scroll</div>
<div class="a" style="left:2467px;top:607px;width:22px;height:22px;background:#2563eb;border-radius:1px"></div>
<svg class="a" style="left:2470px;top:611px" width="16" height="14" viewBox="0 0 16 14">
  <path d="M2.5 7.5l3.6 3.6 7.4-8.2" fill="none" stroke="#fff" stroke-width="2.6" stroke-linecap="round" stroke-linejoin="round"/>
</svg>
<div class="a" style="left:1537px;top:650px;height:25px;line-height:26px;font-family:'Liberation Mono',monospace;font-size:16.8px;color:#3f4854">No logs are available yet</div>
<div class="a" style="left:1527px;top:973px;width:973px;height:2px;background:#d9dce1"></div>
<div class="a" style="left:1539px;top:986px;height:28px;line-height:28px;font-size:20.7px;color:#4b5563">Test to see the result here</div>
</body></html>
